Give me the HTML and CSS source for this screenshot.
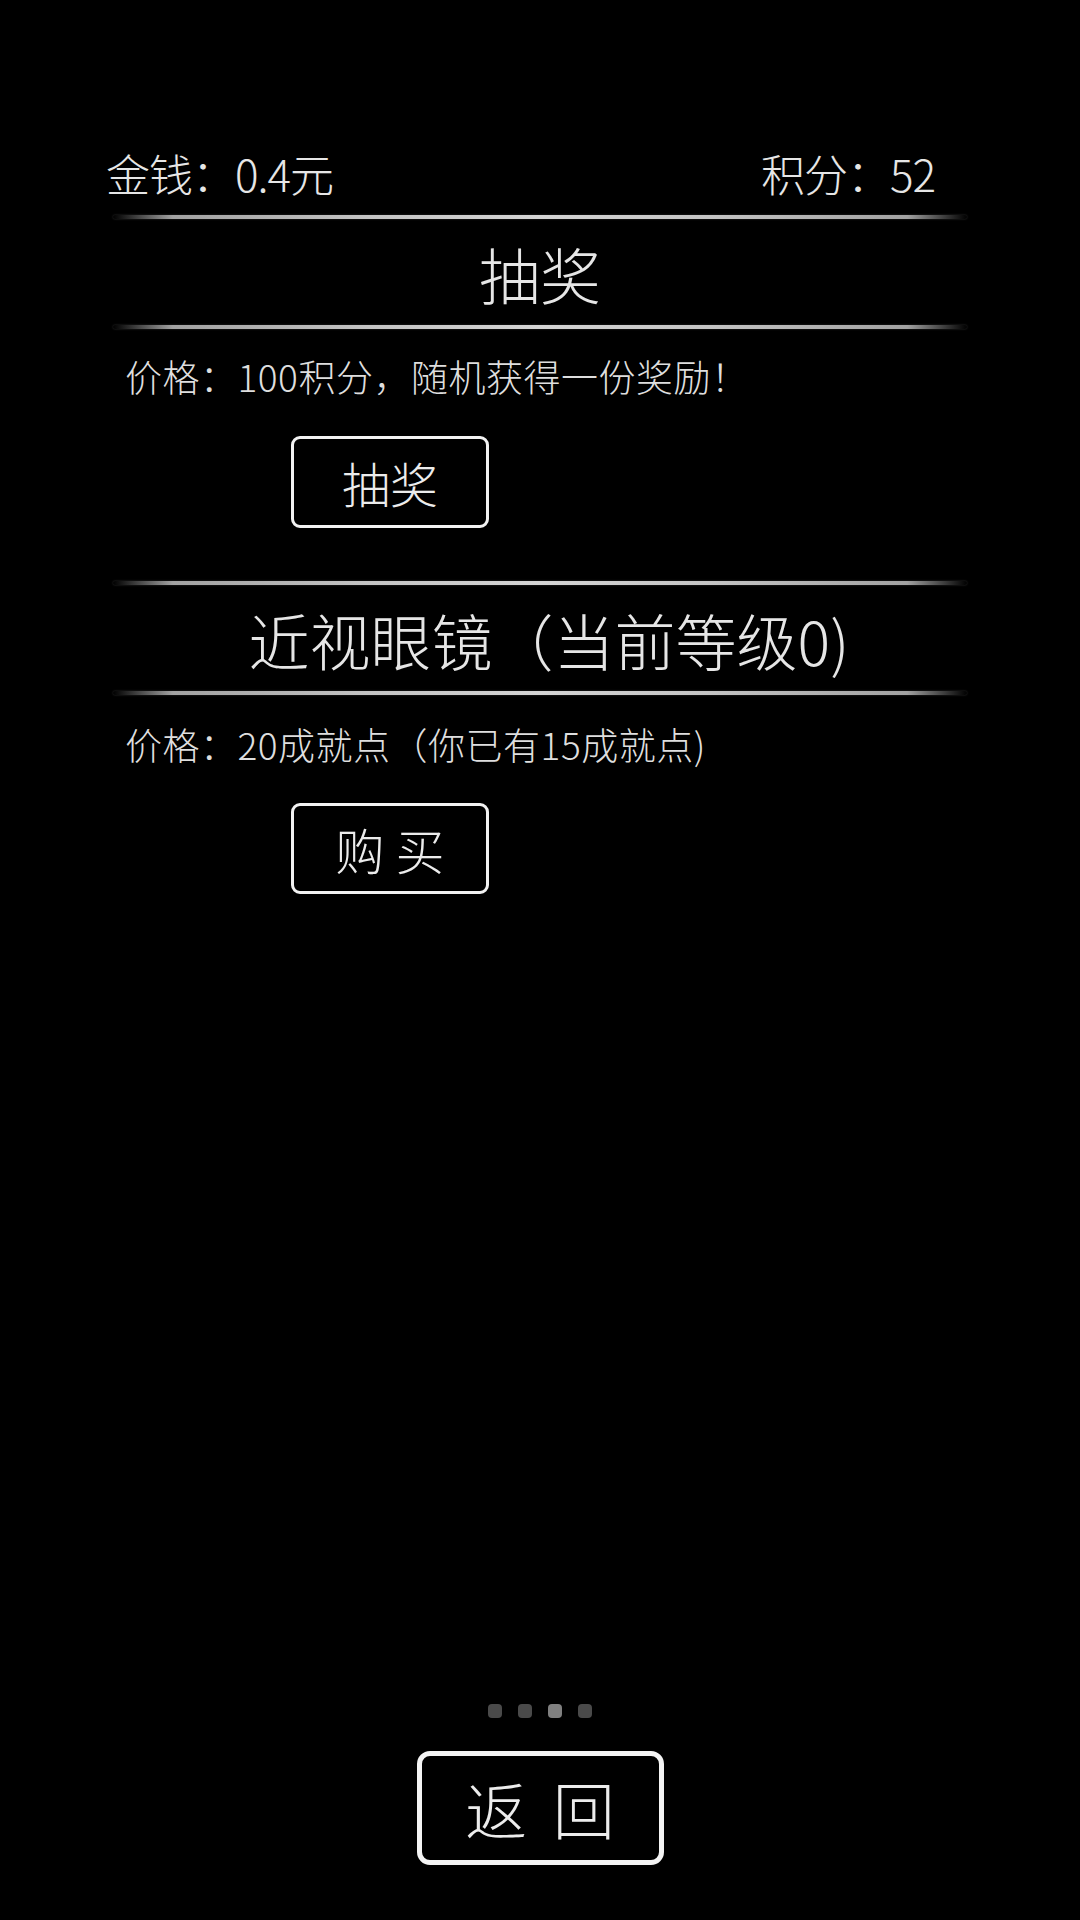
FILE: index.html
```html
<!DOCTYPE html>
<html lang="zh-CN">
<head>
<meta charset="utf-8">
<title>商店</title>
<link rel="stylesheet" href="styles.css">
</head>
<body>
<div class="page">
  <div class="stats">
    <span class="stat">金钱<span class="colon">：</span>0.4元</span>
    <span class="stat">积分<span class="colon">：</span>52</span>
  </div>

  <section class="item item-first">
    <div class="rule"></div>
    <h2 class="item-title">抽奖</h2>
    <div class="rule rule-lower"></div>
    <p class="price">价格<span class="colon">：</span>100积分，随机获得一份奖励！</p>
    <button class="action">抽奖</button>
  </section>

  <section class="item">
    <div class="rule"></div>
    <h2 class="item-title item-title-long">近视眼镜（当前等级0)</h2>
    <div class="rule rule-lower"></div>
    <p class="price price-second">价格<span class="colon">：</span>20成就点（你已有15成就点)</p>
    <button class="action action-buy">购 买</button>
  </section>

  <footer class="footer">
    <div class="pager">
      <span class="dot"></span>
      <span class="dot"></span>
      <span class="dot dot-active"></span>
      <span class="dot"></span>
    </div>
    <button class="back">返 回</button>
  </footer>
</div>
</body>
</html>
```

FILE: styles.css
```css
* {
  box-sizing: border-box;
}

html,
body {
  margin: 0;
  padding: 0;
  background: #000;
}

body {
  font-family: "Noto Sans CJK SC", "Noto Sans", sans-serif;
  font-weight: 300;
  color: #e6e6e6;
}

.page {
  width: 1080px;
  height: 1920px;
  display: flex;
  flex-direction: column;
  padding-top: 151px;
  padding-bottom: 55px;
}

/* centred full-width colon */
.colon {
  font-family: "Noto Sans CJK TC", "Noto Sans CJK SC", sans-serif;
}

/* money / points header */
.stats {
  display: flex;
  justify-content: space-between;
  padding: 0 145px 0 106px;
}

.stat {
  font-size: 44px;
  line-height: 44px;
  letter-spacing: -1px;
}

/* shop entries */
.item {
  display: flex;
  flex-direction: column;
  margin-top: 53px;
}

.item-first {
  margin-top: 20px;
}

.rule {
  height: 4px;
  margin: 0 113px;
  background: linear-gradient(90deg,
    rgba(190, 190, 190, 0) 0%,
    rgba(190, 190, 190, 0.85) 7%,
    #c4c4c4 30%,
    #d4d4d4 50%,
    #c4c4c4 70%,
    rgba(190, 190, 190, 0.85) 93%,
    rgba(190, 190, 190, 0) 100%);
  box-shadow: 0 0 2px rgba(160, 160, 160, 0.35);
  border-radius: 2px;
}

.item-title {
  margin: 24px 0 20px;
  font-size: 61px;
  line-height: 62px;
  font-weight: 300;
  text-align: center;
}

.item-title-long {
  padding-left: 18px;
}

.price {
  margin: 29px 0 0;
  padding-left: 125px;
  font-size: 37px;
  line-height: 37px;
  letter-spacing: 0.5px;
  color: #dedede;
}

.price-second {
  margin-top: 31px;
}

.action {
  align-self: flex-start;
  margin: 41px 0 0 291px;
  width: 198px;
  height: 92px;
  padding: 0;
  background: #000;
  border: 3px solid #f2f2f2;
  border-radius: 9px;
  color: #ececec;
  font-family: inherit;
  font-weight: 300;
  font-size: 48px;
  line-height: 1;
}

.action-buy {
  margin-top: 40px;
  height: 91px;
  font-size: 49px;
}

/* page indicator and back button */
.footer {
  margin-top: auto;
  display: flex;
  flex-direction: column;
  align-items: center;
}

.pager {
  display: flex;
  gap: 16px;
  margin-bottom: 33px;
}

.dot {
  width: 14px;
  height: 14px;
  border-radius: 4px;
  background: #4a4a4a;
}

.dot-active {
  background: #808080;
}

.back {
  width: 247px;
  height: 114px;
  padding: 0;
  background: #000;
  border: 5px solid #f4f4f4;
  border-radius: 13px;
  color: #ececec;
  font-family: inherit;
  font-weight: 300;
  font-size: 62px;
  line-height: 1;
  word-spacing: 12px;
}
```
